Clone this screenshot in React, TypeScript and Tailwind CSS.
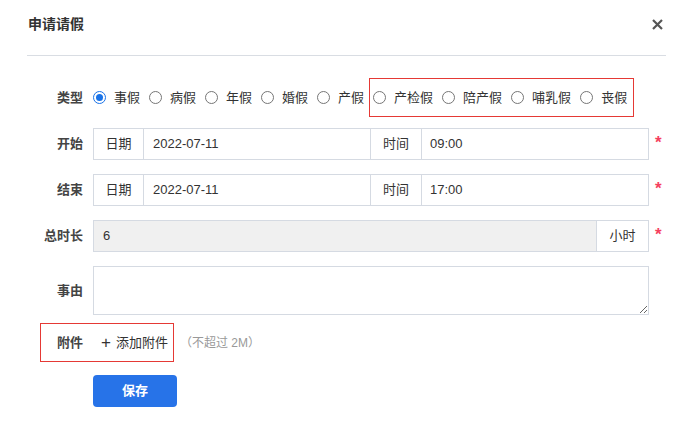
import React from 'react'

const font = { fontFamily: '"Liberation Sans", "Noto Sans CJK SC", sans-serif' }

type Opt = { label: string; checked?: boolean }

const mainTypes: Opt[] = [
  { label: '事假', checked: true },
  { label: '病假' },
  { label: '年假' },
  { label: '婚假' },
  { label: '产假' },
]
const extraTypes: Opt[] = [{ label: '产检假' }, { label: '陪产假' }, { label: '哺乳假' }, { label: '丧假' }]

function Radio({ label, checked, last }: Opt & { last?: boolean }) {
  return (
    <label className={`flex items-center ${last ? '' : 'mr-[9px]'}`}>
      {checked ? (
        <span className="flex h-[13px] w-[13px] items-center justify-center rounded-full border-[1.5px] border-[#1a73e8]">
          <span className="h-[7px] w-[7px] rounded-full bg-[#1a73e8]" />
        </span>
      ) : (
        <span className="h-[13px] w-[13px] rounded-full border border-[#767676]" />
      )}
      <span className="ml-[8px] text-[13px] text-[#333]">{label}</span>
    </label>
  )
}

function Label({ children }: { children: React.ReactNode }) {
  return <div className="w-[56px] shrink-0 text-right text-[13px] font-bold text-[#444]">{children}</div>
}

function Star() {
  return <span className="ml-[6px] mt-[-3px] text-[17px] font-bold text-[#f5405e]">*</span>
}

function DateTimeRow({ label, date, time }: { label: string; date: string; time: string }) {
  return (
    <div className="flex items-center">
      <Label>{label}</Label>
      <div className="ml-[10px] flex h-[32px] w-[556px] border border-[#d5dae2] text-[13px] text-[#333]">
        <div className="flex w-[50px] items-center justify-center border-r border-[#d5dae2]">日期</div>
        <div className="flex w-[227px] items-center border-r border-[#d5dae2] px-[9px]">{date}</div>
        <div className="flex w-[51px] items-center justify-center border-r border-[#d5dae2]">时间</div>
        <div className="flex flex-1 items-center px-[8px]">{time}</div>
      </div>
      <Star />
    </div>
  )
}

export default function App() {
  return (
    <div className="h-[430px] w-full bg-white px-[27px]" style={font}>
      <div className="flex h-[56px] items-center justify-between border-b border-[#d9dde3] pb-[6px]">
        <div className="ml-[1px] text-[14px] font-bold text-[#333]">申请请假</div>
        <svg width="11" height="11" viewBox="0 0 11 11" className="mr-[3px]">
          <path d="M1 1 L10 10 M10 1 L1 10" stroke="#555" strokeWidth="2.2" />
        </svg>
      </div>

      <div className="mt-[22px] flex items-center">
        <Label>类型</Label>
        <div className="ml-[10px] flex items-center">
          {mainTypes.map((o) => (
            <Radio key={o.label} {...o} />
          ))}
        </div>
        <div className="ml-[-4px] flex h-[39px] items-center border border-[#e53935] pl-[3px] pr-[6px]">
          {extraTypes.map((o, i) => (
            <Radio key={o.label} {...o} last={i === extraTypes.length - 1} />
          ))}
        </div>
      </div>

      <div className="mt-[11px] flex flex-col gap-[14px]">
        <DateTimeRow label="开始" date="2022-07-11" time="09:00" />
        <DateTimeRow label="结束" date="2022-07-11" time="17:00" />

        <div className="flex items-center">
          <Label>总时长</Label>
          <div className="ml-[10px] flex h-[32px] w-[556px] border border-[#d5dae2] text-[13px] text-[#333]">
            <div className="flex flex-1 items-center border-r border-[#d5dae2] bg-[#f0f0f0] px-[9px]">6</div>
            <div className="flex w-[51px] items-center justify-center">小时</div>
          </div>
          <Star />
        </div>

        <div className="flex items-center">
          <Label>事由</Label>
          <textarea className="ml-[10px] h-[49px] w-[556px] border border-[#d5dae2] px-[9px] py-[6px] text-[13px] outline-none" />
        </div>
      </div>

      <div className="mt-[8px] flex items-center">
        <div className="ml-[13px] flex h-[39px] w-[134px] items-center border border-[#e53935]">
          <div className="w-[42px] text-right text-[13px] font-bold text-[#444]">附件</div>
          <div className="ml-[18px] flex items-center text-[13px] text-[#333]">
            <span className="text-[17px] font-light leading-none">+</span>
            <span className="ml-[5px]">添加附件</span>
          </div>
        </div>
        <div className="ml-[6px] text-[12px] text-[#999]">（不超过 2M）</div>
      </div>

      <button className="ml-[66px] mt-[13px] h-[32px] w-[84px] rounded-[4px] bg-[#2773e8] text-[13px] font-bold text-white">
        保存
      </button>
    </div>
  )
}
